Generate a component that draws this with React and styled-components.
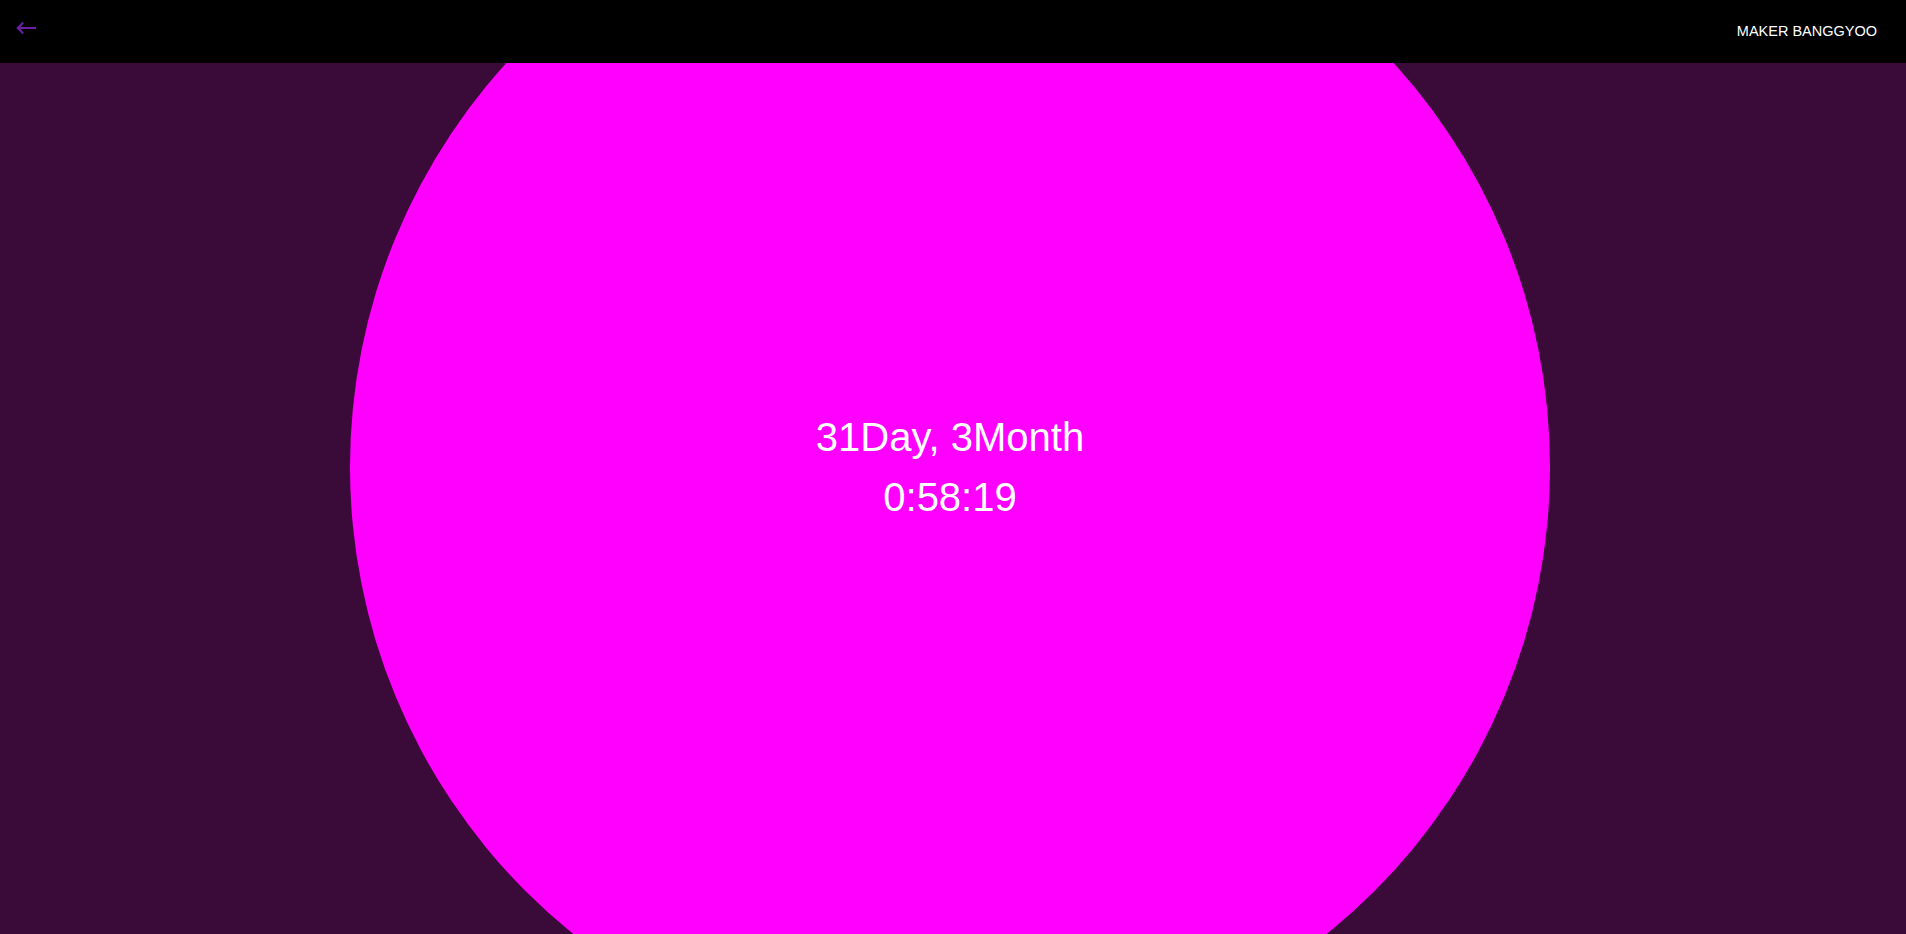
import React from "react";
import styled, { createGlobalStyle } from "styled-components";

const Global = createGlobalStyle`
  html, body { margin: 0; padding: 0; height: 100%; }
  body {
    background: #3a0a38;
    font-family: "Liberation Sans", Arial, sans-serif;
    overflow: hidden;
  }
`;

const Page = styled.div`
  position: relative;
  width: 100%;
  height: 100vh;
  overflow: hidden;
  background: #3a0a38;
`;

const Header = styled.header`
  position: absolute;
  top: 0;
  left: 0;
  right: 0;
  z-index: 2;
  height: 63px;
  background: #000;
  display: flex;
  align-items: center;
  justify-content: space-between;
  padding: 0 29px 0 15px;
  box-sizing: border-box;
`;

const BackButton = styled.button`
  display: flex;
  align-items: center;
  justify-content: center;
  background: none;
  border: none;
  padding: 0;
  margin-top: -7px;
  cursor: pointer;
  width: 22px;
  height: 22px;
`;

const Maker = styled.span`
  color: #ffffff;
  font-size: 14.5px;
  margin-top: -2px;
`;

const Stage = styled.main`
  height: 100%;
  display: flex;
  align-items: center;
  justify-content: center;
  padding-right: 6px;
  box-sizing: border-box;
`;

const Circle = styled.div`
  flex-shrink: 0;
  width: 1200px;
  height: 1200px;
  border-radius: 50%;
  background: #ff00ff;
  display: flex;
  flex-direction: column;
  align-items: center;
  justify-content: center;
  color: #ffffff;
`;

const Line = styled.div`
  font-size: 40px;
  line-height: 60px;
  white-space: nowrap;
`;

export default function App() {
  return (
    <>
      <Global />
      <Page>
        <Header>
          <BackButton aria-label="back">
            <svg width="20" height="12" viewBox="0 0 20 12" fill="none">
              <path
                d="M19 6H2M6.5 1.2L1.7 6l4.8 4.8"
                stroke="#6c1fa6"
                strokeWidth="2"
                strokeLinecap="square"
              />
            </svg>
          </BackButton>
          <Maker>MAKER BANGGYOO</Maker>
        </Header>
        <Stage>
          <Circle>
            <Line>31Day, 3Month</Line>
            <Line>0:58:19</Line>
          </Circle>
        </Stage>
      </Page>
    </>
  );
}
